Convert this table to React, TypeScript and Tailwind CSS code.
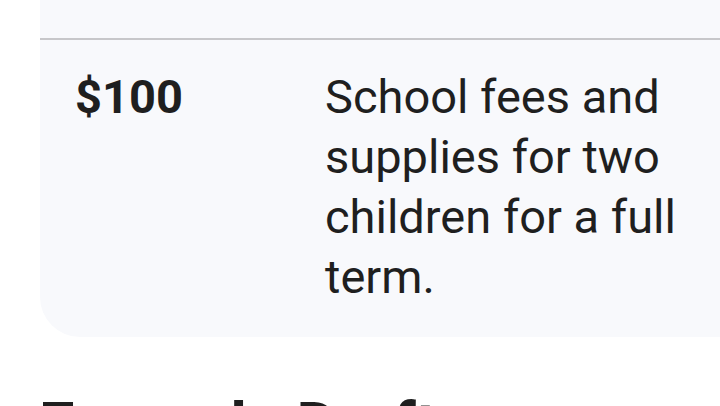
const rows = [
  {
    amount: '$100',
    detail: 'School fees and supplies for two children for a full term.',
  },
];

export default function App() {
  return (
    <div className="h-[406px] w-[720px] overflow-hidden bg-white font-['Roboto','Liberation_Sans',sans-serif] text-[#1f1f1f]">
      <div className="ml-[40px] rounded-bl-[40px] bg-[#f8f9fc]">
        <div className="h-[38px]" />
        {rows.map((row) => (
          <div
            key={row.amount}
            className="flex border-t-2 border-[#c7c7ca] pb-[30px] pt-[27px] text-[47px] leading-[60px]"
          >
            <div className="w-[285px] shrink-0 pl-[35px] font-bold">{row.amount}</div>
            <div className="w-[360px]">{row.detail}</div>
          </div>
        ))}
      </div>
      <h2 className="mt-[51px] pl-[39px] text-[63px] font-bold leading-[76px]">Example Draft</h2>
    </div>
  );
}
